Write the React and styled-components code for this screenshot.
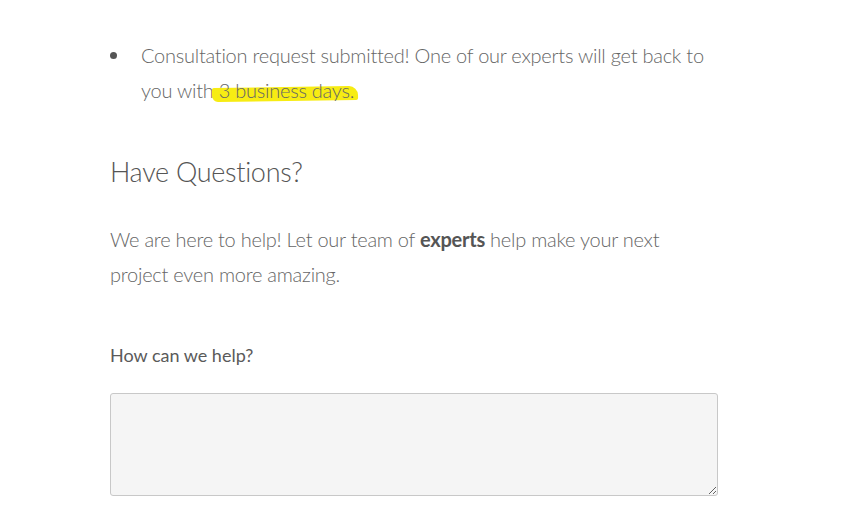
import React from 'react';
import styled, { createGlobalStyle } from 'styled-components';

const GlobalStyle = createGlobalStyle`
  body {
    margin: 0;
    background: #fff;
    font-family: Lato, "Open Sans", sans-serif;
    font-weight: 300;
    color: #666;
  }
`;

const Page = styled.div`
  padding: 38px 0 0 110px;
  width: 608px;
`;

const List = styled.ul`
  list-style: none;
  margin: 0;
  padding: 0 0 0 31px;
`;

const Item = styled.li`
  position: relative;
  font-size: 20px;
  line-height: 35px;
  letter-spacing: -0.25px;

  &::before {
    content: '';
    position: absolute;
    left: -31px;
    top: 14px;
    width: 7px;
    height: 7px;
    border-radius: 50%;
    background: #555;
  }
`;

const Marker = styled.span`
  position: relative;
  z-index: 0;

  &::before {
    content: '';
    position: absolute;
    z-index: -1;
    left: -2px;
    right: -3px;
    top: 9px;
    height: 14px;
    background: #f7ec13;
    border-radius: 2px 9px 2px 6px;
    transform: rotate(-0.8deg);
  }
`;

const Heading = styled.h2`
  margin: 44px 0 0;
  font-size: 27px;
  font-weight: 300;
  line-height: 40px;
  letter-spacing: -0.3px;
  color: #555;
`;

const Text = styled.p`
  margin: 30px 0 0;
  font-size: 20px;
  line-height: 35px;
  letter-spacing: -0.25px;
`;

const Strong = styled.strong`
  font-weight: 700;
  color: #555;
`;

const Label = styled.label`
  display: block;
  margin-top: 51px;
  font-size: 18px;
  font-weight: 400;
  line-height: 24px;
  color: #5a5a5a;
`;

const Area = styled.textarea`
  display: block;
  box-sizing: border-box;
  margin-top: 26px;
  width: 608px;
  height: 103px;
  background: #f5f5f5;
  border: 1px solid #c8c8c8;
  border-radius: 3px;
  font-family: inherit;
  font-size: 16px;
  resize: vertical;
`;

export default function App() {
  return (
    <>
      <GlobalStyle />
      <Page>
        <List>
          <Item>
            Consultation request submitted! One of our experts will get back to you with
            <Marker> 3 business days.</Marker>
          </Item>
        </List>
        <Heading>Have Questions?</Heading>
        <Text>
          We are here to help! Let our team of <Strong>experts</Strong> help make your next
          project even more amazing.
        </Text>
        <Label htmlFor="help">How can we help?</Label>
        <Area id="help" />
      </Page>
    </>
  );
}
